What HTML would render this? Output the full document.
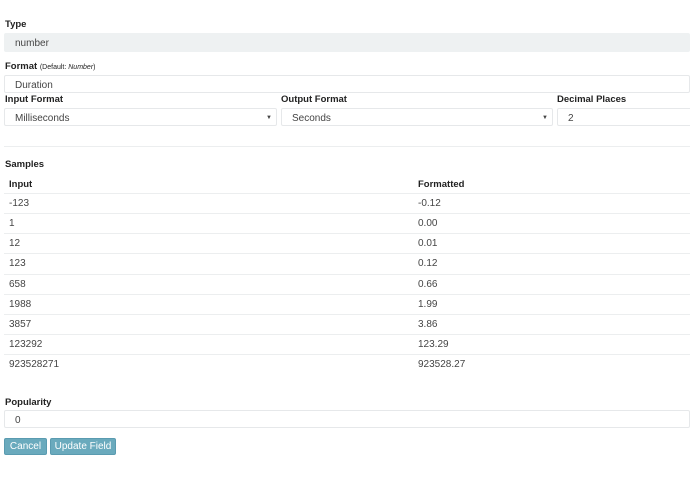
<!DOCTYPE html>
<html><head><style>
body{margin:0;width:690px;height:482px;background:#fff;font-family:"Liberation Sans",sans-serif;font-size:10px;color:#333;position:relative;overflow:hidden}
.a{position:absolute}
.l{font-weight:bold;font-size:9.5px;color:#222}
.in{position:absolute;height:17px;border:1px solid #e6e8ea;border-radius:2px;box-sizing:border-box;line-height:19px;padding-left:10px;background:#fff;color:#444}
.arr{position:absolute;right:4px;top:0;font-size:6px}
.row{position:absolute;left:4px;width:686px;height:20px;border-top:1px solid #eceeef;line-height:20px;color:#444}
.row span{position:absolute}
.btn{position:absolute;top:438px;height:17px;background:#6aaabd;border:1px solid #5a9bb0;border-radius:2px;color:#fff;line-height:16px;text-align:center;box-sizing:border-box}
</style></head><body>
<div class="a l" style="left:5px;top:19px">Type</div>
<div class="in" style="left:4px;top:33px;width:686px;height:19px;background:#eef1f2;border-color:#eef1f2;line-height:19px">number</div>
<div class="a l" style="left:5px;top:61px">Format <span style="font-weight:normal;font-size:7px">(Default: <i>Number</i>)</span></div>
<div class="in" style="left:4px;top:75px;width:686px;height:18px">Duration</div>
<div class="a l" style="left:5px;top:94px">Input Format</div>
<div class="a l" style="left:281px;top:94px">Output Format</div>
<div class="a l" style="left:557px;top:94px">Decimal Places</div>
<div class="in" style="left:4px;top:108px;width:273px;height:18px">Milliseconds<span class="arr">▼</span></div>
<div class="in" style="left:281px;top:108px;width:272px;height:18px">Seconds<span class="arr">▼</span></div>
<div class="in" style="left:557px;top:108px;width:140px;height:18px">2</div>
<div class="a" style="left:4px;top:146px;width:686px;border-top:1px solid #eceeef"></div>
<div class="a l" style="left:5px;top:159px">Samples</div>
<div class="a l" style="left:9px;top:179px">Input</div>
<div class="a l" style="left:418px;top:179px">Formatted</div>
<div class="row" style="top:193px"><span style="left:5px">-123</span><span style="left:414px">-0.12</span></div>
<div class="row" style="top:213px"><span style="left:5px">1</span><span style="left:414px">0.00</span></div>
<div class="row" style="top:233px"><span style="left:5px">12</span><span style="left:414px">0.01</span></div>
<div class="row" style="top:253px"><span style="left:5px">123</span><span style="left:414px">0.12</span></div>
<div class="row" style="top:274px"><span style="left:5px">658</span><span style="left:414px">0.66</span></div>
<div class="row" style="top:294px"><span style="left:5px">1988</span><span style="left:414px">1.99</span></div>
<div class="row" style="top:314px"><span style="left:5px">3857</span><span style="left:414px">3.86</span></div>
<div class="row" style="top:334px"><span style="left:5px">123292</span><span style="left:414px">123.29</span></div>
<div class="row" style="top:354px"><span style="left:5px">923528271</span><span style="left:414px">923528.27</span></div>
<div class="a l" style="left:5px;top:397px">Popularity</div>
<div class="in" style="left:4px;top:410px;width:686px;height:18px">0</div>
<div class="btn" style="left:4px;width:43px">Cancel</div>
<div class="btn" style="left:50px;width:66px">Update Field</div>
</body></html>
